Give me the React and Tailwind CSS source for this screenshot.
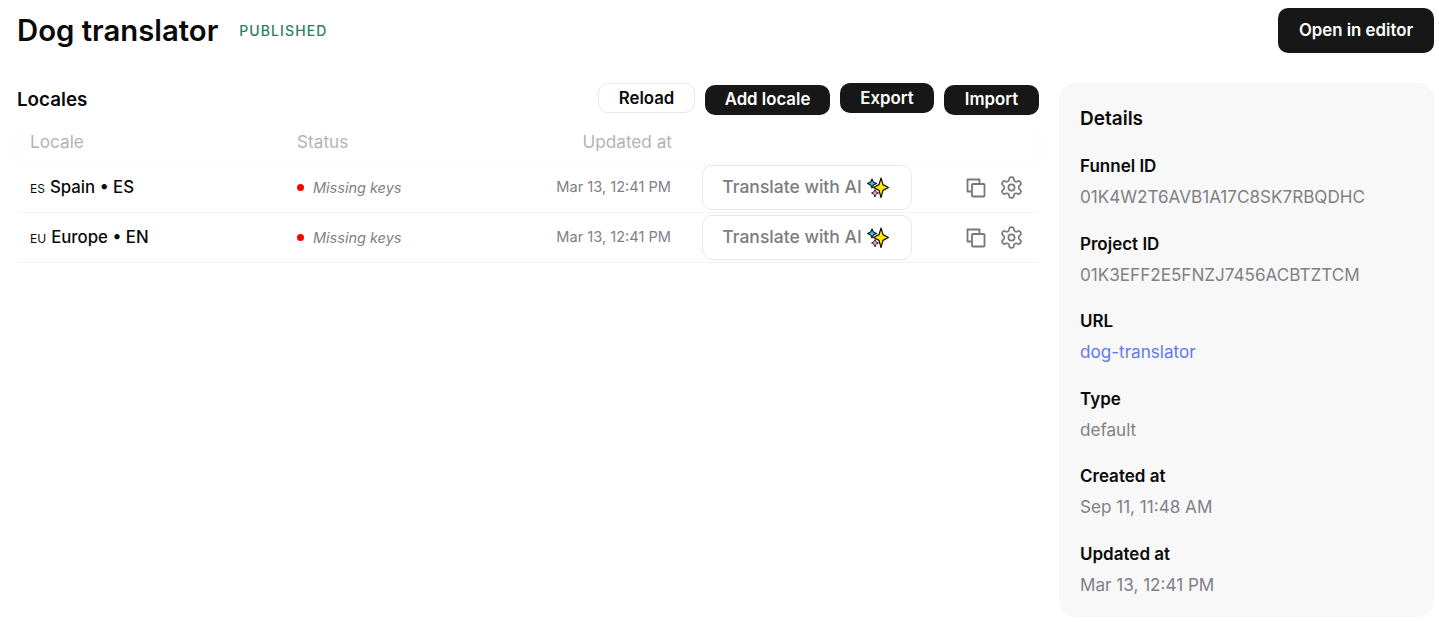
import React from 'react';

const locales = [
  { code: 'ES', name: 'Spain • ES' },
  { code: 'EU', name: 'Europe • EN' },
];

const details = [
  { label: 'Funnel ID', value: '01K4W2T6AVB1A17C8SK7RBQDHC' },
  { label: 'Project ID', value: '01K3EFF2E5FNZJ7456ACBTZTCM' },
  { label: 'URL', value: 'dog-translator', link: true },
  { label: 'Type', value: 'default' },
  { label: 'Created at', value: 'Sep 11, 11:48 AM' },
  { label: 'Updated at', value: 'Mar 13, 12:41 PM' },
];

const Sparkles = () => (
  <svg width="22" height="22" viewBox="0 0 22 22" className="shrink-0">
    <path d="M5 2 L6.4 5.1 L9.5 6.5 L6.4 7.9 L5 11 L3.6 7.9 L.5 6.5 L3.6 5.1 Z" fill="#2fc3f0" stroke="#111" strokeWidth="1.1" strokeLinejoin="round" />
    <path d="M8 12.5 L9.2 14.8 L11.5 16 L9.2 17.2 L8 20 L6.8 17.2 L4.5 16 L6.8 14.8 Z" fill="#f08cc4" stroke="#333" strokeWidth="1" strokeLinejoin="round" />
    <path d="M14 1 L16 7.6 L21.5 10.5 L16 13.4 L14 20.5 L12 13.4 L6.5 10.5 L12 7.6 Z" fill="#ffe600" stroke="#111" strokeWidth="1.2" strokeLinejoin="round" />
  </svg>
);

const CopyIcon = () => (
  <svg width="20" height="20" viewBox="0 0 20 20" fill="none" stroke="#77777c" strokeWidth="1.8" className="shrink-0">
    <path d="M5.5 13.5H1.5V1.5H13.5V5.5" strokeLinejoin="round" />
    <rect x="6" y="6" width="12.5" height="12.5" rx="0.8" />
  </svg>
);

const GearIcon = () => (
  <svg width="25" height="25" viewBox="0 0 24 24" fill="none" stroke="#77777c" strokeWidth="1.6" strokeLinecap="round" strokeLinejoin="round" className="shrink-0">
    <path d="M12.22 2h-.44a2 2 0 0 0-2 2v.18a2 2 0 0 1-1 1.73l-.43.25a2 2 0 0 1-2 0l-.15-.08a2 2 0 0 0-2.73.73l-.22.38a2 2 0 0 0 .73 2.73l.15.1a2 2 0 0 1 1 1.72v.51a2 2 0 0 1-1 1.74l-.15.09a2 2 0 0 0-.73 2.73l.22.38a2 2 0 0 0 2.73.73l.15-.08a2 2 0 0 1 2 0l.43.25a2 2 0 0 1 1 1.73V20a2 2 0 0 0 2 2h.44a2 2 0 0 0 2-2v-.18a2 2 0 0 1 1-1.73l.43-.25a2 2 0 0 1 2 0l.15.08a2 2 0 0 0 2.73-.73l.22-.39a2 2 0 0 0-.73-2.73l-.15-.08a2 2 0 0 1-1-1.74v-.5a2 2 0 0 1 1-1.74l.15-.09a2 2 0 0 0 .73-2.73l-.22-.38a2 2 0 0 0-2.73-.73l-.15.08a2 2 0 0 1-2 0l-.43-.25a2 2 0 0 1-1-1.73V4a2 2 0 0 0-2-2z" />
    <circle cx="12" cy="12" r="3" />
  </svg>
);

const DarkButton = ({ className, children }) => (
  <button className={`bg-[#171717] text-white font-semibold text-[16.8px] flex items-center justify-center ${className}`}>
    {children}
  </button>
);

export default function App() {
  return (
    <div className="h-[622px] overflow-hidden bg-white pl-[17px] pr-[5px] font-['Inter',sans-serif] text-[#0a0a0a]">
      <header className="flex items-start justify-between pt-2 h-[83px]">
        <div className="flex items-center gap-[21px] h-[45px]">
          <h1 className="text-[29.3px] font-semibold leading-none">Dog translator</h1>
          <span className="text-[14px] font-medium tracking-[1.1px] text-[#2f7d64] -mt-[1px]">PUBLISHED</span>
        </div>
        <DarkButton className="w-[156px] h-[45px] rounded-[10px]">Open in editor</DarkButton>
      </header>

      <div className="flex gap-5">
        <main className="w-[1022px]">
          <div className="flex items-start justify-between h-[39px]">
            <h2 className="text-[18.8px] font-semibold mt-[3px]">Locales</h2>
            <div className="flex items-start gap-[10px]">
              <button className="w-[97px] h-[30px] pt-px rounded-[10px] border border-[#e8e8e8] bg-white font-semibold text-[16.8px] flex items-center justify-center">Reload</button>
              <DarkButton className="w-[125px] h-[30px] rounded-[10px] mt-[2px]">Add locale</DarkButton>
              <DarkButton className="w-[94px] h-[30px] pt-px rounded-[10px]">Export</DarkButton>
              <DarkButton className="w-[95px] h-[30px] rounded-[10px] mt-[2px]">Import</DarkButton>
            </div>
          </div>

          <div className="grid grid-cols-[267px_175px_200px] pl-[13px] pb-[2px] h-[41px] items-center text-[17.2px] text-[#b3b3b7] shadow-[0_2px_5px_rgba(0,0,0,0.025)]">
            <div>Locale</div>
            <div>Status</div>
            <div className="text-right">Updated at</div>
          </div>

          {locales.map((l) => (
            <div key={l.code} className="grid grid-cols-[267px_175px_200px_240px_1fr] pl-[13px] pr-[15px] h-[50px] items-center border-b border-[#f3f3f3]">
              <div className="flex items-center gap-[5px] text-[16.8px] font-medium">
                <span className="text-[12px] font-normal mt-[2px]">{l.code}</span>
                {l.name}
              </div>
              <div className="flex items-center gap-[9px]">
                <span className="size-[7px] rounded-full bg-[#ff0000]" />
                <span className="text-[14.5px] italic text-[#808086]">Missing keys</span>
              </div>
              <div className="text-right pr-px text-[14.6px] text-[#808086]">Mar 13, 12:41 PM</div>
              <div className="pl-[30px]">
                <button className="w-[210px] h-[45px] pr-[3px] rounded-[10px] border border-[#e8e8e8] bg-white flex items-center justify-center gap-[5px] text-[17.5px] font-medium text-[#7c7c82]">
                  Translate with AI
                  <Sparkles />
                </button>
              </div>
              <div className="flex items-center justify-end gap-[13px]">
                <CopyIcon />
                <GearIcon />
              </div>
            </div>
          ))}
        </main>

        <aside className="w-[375px] h-[534px] rounded-[16px] bg-[#f8f8f9] pl-[21px] pr-5 pt-[22px]">
          <h3 className="text-[19px] font-semibold leading-[28px] mb-[20px]">Details</h3>
          <div className="flex flex-col gap-[21.5px]">
            {details.map((d) => (
              <div key={d.label} className="flex flex-col gap-[5px]">
                <div className="text-[17px] font-semibold leading-[26px]">{d.label}</div>
                <div className={`text-[17.1px] leading-[25px] ${d.link ? 'text-[#6078ee]' : 'text-[#808086]'}`}>{d.value}</div>
              </div>
            ))}
          </div>
        </aside>
      </div>
    </div>
  );
}
